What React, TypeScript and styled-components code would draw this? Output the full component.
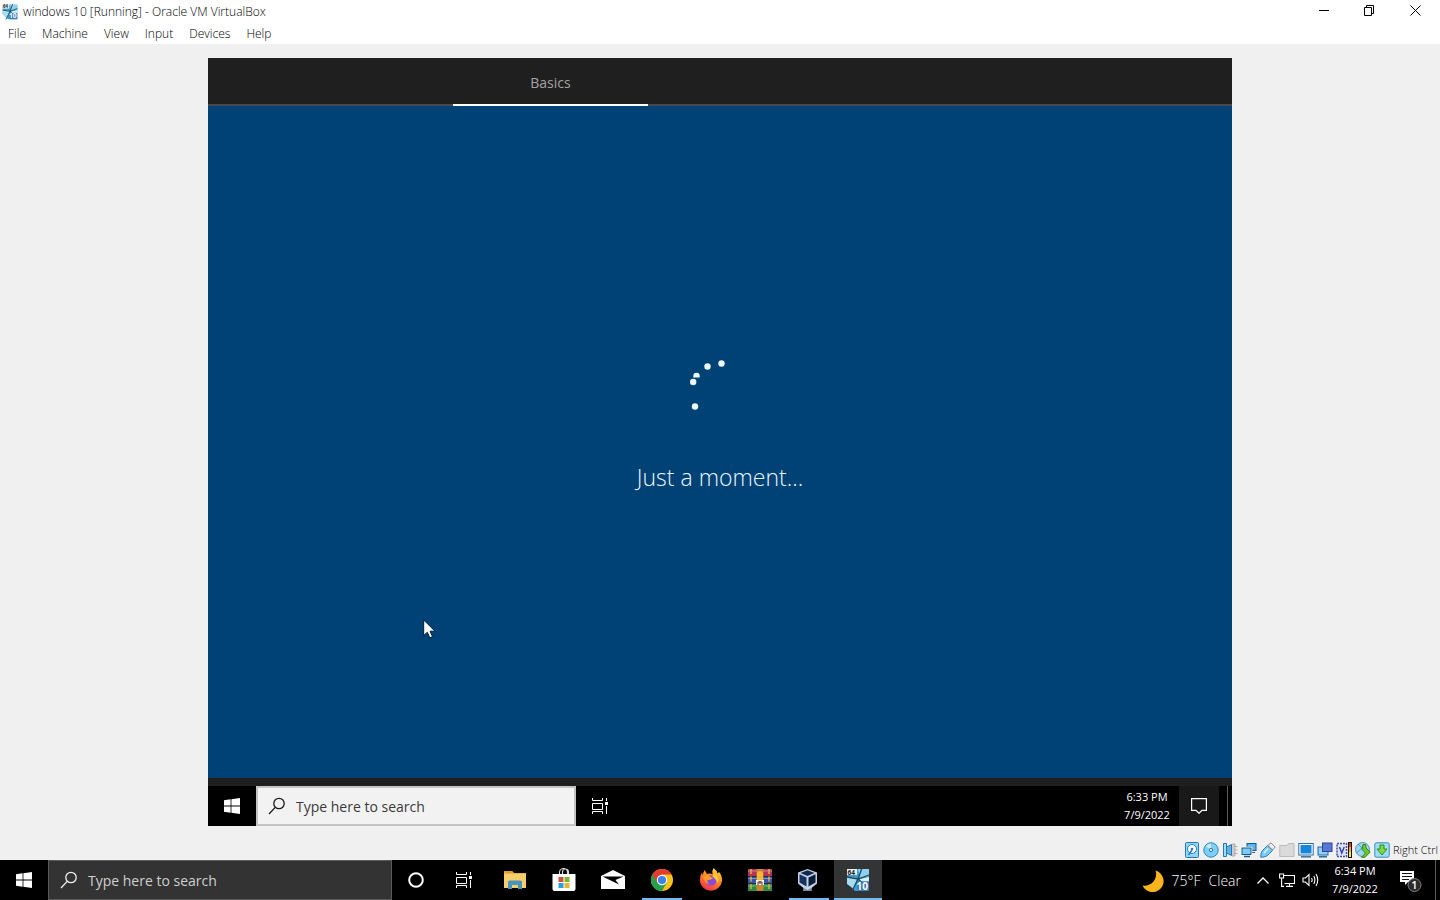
import React from "react";
import styled, { createGlobalStyle, css } from "styled-components";

const GlobalStyle = createGlobalStyle`
  *, *::before, *::after { box-sizing: border-box; }
  body {
    margin: 0;
    background: #f0f0f0;
    color: #000;
    font-family: "Segoe UI", "Open Sans", "Noto Sans", sans-serif;
    font-size: 12px;
  }
  button, input { font: inherit; color: inherit; }
  svg { display: block; flex: none; }
`;

const Window = styled.div`
  display: flex;
  flex-direction: column;
  min-height: 100vh;
`;

const TitleBar = styled.header`
  display: flex;
  align-items: center;
  height: 24px;
  padding: 0 2px;
  background: #fff;
`;

const Title = styled.h1`
  flex: 1;
  margin: 0 0 0 5px;
  font-size: 12px;
  font-weight: 350;
  line-height: 24px;
  white-space: nowrap;
`;

const PlainButton = styled.button`
  display: flex;
  align-items: center;
  justify-content: center;
  border: 0;
  padding: 0;
  background: transparent;
`;

const CaptionButton = styled(PlainButton)`
  width: 46px;
  height: 20px;
  align-self: flex-start;
`;

const MenuBar = styled.nav`
  display: flex;
  height: 20px;
  background: #fff;
`;

const MenuItem = styled(PlainButton)`
  padding: 0 8px;
  font-size: 12px;
  font-weight: 350;
  line-height: 20px;
`;

const Stage = styled.main`
  flex: 1;
  display: flex;
  justify-content: center;
  padding: 14px;
`;

const Guest = styled.section`
  display: flex;
  flex-direction: column;
  width: 100%;
  max-width: 1024px;
  min-height: 768px;
  background: #1f1f1f;
`;

const Steps = styled.div`
  display: grid;
  grid-template-columns: 245px 195px 1fr;
  height: 48px;
  box-shadow: inset 0 -2px #47494c;
`;

const Step = styled(PlainButton)`
  grid-column: 2;
  padding-top: 4px;
  border-bottom: 2px solid #fff;
  color: #a3a3a3;
  font-size: 14px;
  line-height: 20px;
`;

const Setup = styled.div`
  position: relative;
  flex: 1;
  display: flex;
  flex-direction: column;
  align-items: center;
  justify-content: center;
  gap: 41px;
  margin-bottom: 8px;
  padding-bottom: 31px;
  background: #004275;
`;

const Message = styled.p`
  margin: 0;
  color: #e9f7ff;
  font-size: 23px;
  font-weight: 350;
  line-height: 32px;
`;

const Pointer = styled.svg`
  position: absolute;
  left: 215px;
  top: 513px;
`;

const Bar = styled.footer`
  display: flex;
  align-items: stretch;
  height: 40px;
  background: #000;
  color: #fff;
`;

const BarButton = styled(PlainButton)<{ $active?: boolean; $running?: boolean }>`
  width: 48px;
  background: ${(p) => (p.$active ? "#333436" : "transparent")};
  ${(p) =>
    p.$running &&
    css`
      position: relative;
      &::after {
        content: "";
        position: absolute;
        bottom: 0;
        width: ${p.$active ? 48 : 40}px;
        height: 2px;
        background: #76b9ed;
      }
    `}
`;

const Search = styled.label<{ $light?: boolean }>`
  display: flex;
  align-items: center;
  gap: 10px;
  width: ${(p) => (p.$light ? 320 : 344)}px;
  padding: 0 ${(p) => (p.$light ? 10 : 11)}px;
  border: ${(p) => (p.$light ? "2px solid #c3c3c3" : "1px solid #5a5a5a")};
  background: ${(p) => (p.$light ? "#f2f2f2" : "#333")};
  color: ${(p) => (p.$light ? "#1b1b1b" : "#f2f2f2")};
  input {
    flex: 1;
    min-width: 0;
    padding: 2px 0 0;
    border: 0;
    outline: 0;
    background: transparent;
    font-size: 14px;
    line-height: 20px;
  }
  input::placeholder {
    color: ${(p) => (p.$light ? "#3a3a3a" : "#cfcfcf")};
    opacity: 1;
  }
`;

const Apps = styled.div`
  display: flex;
  gap: 1px;
  margin-left: 3px;
`;

const Tray = styled.div`
  display: flex;
  align-items: stretch;
  margin-left: auto;
`;

const Weather = styled(PlainButton)`
  gap: 8px;
  margin-right: 10px;
  padding-top: 2px;
  font-size: 14px;
  font-weight: 350;
  line-height: 20px;
`;

const TrayButton = styled(PlainButton)`
  width: 24px;
`;

const Clock = styled(PlainButton)`
  flex-direction: column;
  width: 64px;
  font-size: 11px;
  line-height: 18px;
  white-space: nowrap;
`;

const ActionCenter = styled(PlainButton)<{ $shaded?: boolean }>`
  width: ${(p) => (p.$shaded ? 40 : 48)}px;
  background: ${(p) => (p.$shaded ? "#191919" : "transparent")};
`;

const ShowDesktop = styled(PlainButton)<{ $wide?: boolean }>`
  width: 5px;
  margin-left: ${(p) => (p.$wide ? 8 : 0)}px;
  border-left: 1px solid #5c5c5c;
`;

const StatusBar = styled.div`
  display: flex;
  align-items: center;
  justify-content: flex-end;
  gap: 3px;
  height: 20px;
  padding-right: 2px;
  font-size: 11px;
  font-weight: 350;
  line-height: 20px;
`;

const Windows = () => (
  <svg width="16" height="16" viewBox="0 0 16 16" fill="#fff">
    <path d="M0 2.3 6.6 1.3V7.6H0zM7.4 1.2 16 0V7.6H7.4zM0 8.4H6.6V14.7L0 13.7zM7.4 8.4H16V16L7.4 14.8z" />
  </svg>
);

const Magnifier = () => (
  <svg width="18" height="18" viewBox="0 0 18 18" fill="none" stroke="currentColor" strokeWidth="1.3">
    <circle cx="11" cy="6.5" r="5.2" />
    <path d="M7.2 10.4 1 17" />
  </svg>
);

const TaskView = () => (
  <svg width="18" height="16" viewBox="0 0 18 16" fill="none" stroke="#fff">
    <path d="M1.500 0V2.500H11.500V0M1.500 16V13.500H11.500V16M1.500 5.500H11.500V11.500H1.500zM15.500 0V3M15.500 8V16" />
    <path d="M14 4H17V7H14z" fill="#fff" stroke="none" />
  </svg>
);

const VmIcon = ({ size }: { size: number }) => (
  <svg width={size} height={size} viewBox="0 0 24 24">
    <path d="M1 1H23V23H9L1 15z" fill="#3f9cca" />
    <path d="M12 1H23V8L14 10z" fill="#8fd0ee" />
    <path d="M1 9 11 10 8 21 1 16z" fill="#a8dcf2" />
    <path d="M14 11 23 9V14H13z" fill="#d7f0fa" />
    <path d="M16 0 12 11 6 23M1 9 12 11 23 7M12 11 20 18" stroke="#1d4a66" strokeWidth="1.3" fill="none" />
    <path d="M1 1H11V7H1z" fill="#eee" />
    <text x="1.500" y="6.500" fontSize="6.500" fontWeight="700" fill="#222">64</text>
    <path d="M11 13H23V23H12z" fill="#3a74b4" opacity=".75" />
    <text x="10.500" y="21.500" fontSize="10" fontWeight="700" fill="#fff">10</text>
  </svg>
);

const Folder = () => (
  <svg width="22" height="20" viewBox="0 0 22 20">
    <path d="M0 1H8L10 3H22V18H0z" fill="#e8b542" />
    <path d="M0 4H22V18H0z" fill="#f6cf6c" />
    <path d="M0 1H8L10 3H2z" fill="#d99f2b" />
    <path d="M4 19V12Q4 10.500 5.500 10.500H16.500Q18 10.500 18 12V19H14V15H8V19z" fill="#4a93bd" />
  </svg>
);

const Store = () => (
  <svg width="24" height="24" viewBox="0 0 24 24">
    <path d="M7.500 7V4.500A4 4 0 0 1 15.500 4.500V7M10.500 7V4A3 3 0 0 1 16.500 4V7" fill="none" stroke="#ddd" strokeWidth="1.1" />
    <path d="M.5 6H23.500V21Q23.500 23 21.500 23H2.500Q.5 23 .5 21z" fill="#fff" />
    <path d="M6.500 9H11.500V14H6.500z" fill="#c9553c" />
    <path d="M12.500 9H17.500V14H12.500z" fill="#7fb32c" />
    <path d="M6.500 15H11.500V20H6.500z" fill="#2a9fdb" />
    <path d="M12.500 15H17.500V20H12.500z" fill="#dfbb2b" />
  </svg>
);

const Mail = () => (
  <svg width="24" height="20" viewBox="0 0 24 20">
    <path d="M0 6 12 0 24 6V19H0z" fill="#fff" />
    <path d="M1.500 6.500H22.500L14.500 10 18 14.500z" fill="#000" />
  </svg>
);

const Chrome = () => (
  <svg width="22" height="22" viewBox="0 0 22 22">
    <circle cx="11" cy="11" r="11" fill="#fbc116" />
    <path d="M11 11 1.470 5.500A11 11 0 0 0 11 22L15.800 13.700z" fill="#27a04b" />
    <path d="M1.470 5.500A11 11 0 0 1 20.530 5.500H11L6.200 13.700z" fill="#e33b2e" />
    <circle cx="11" cy="11" r="5.200" fill="#fff" />
    <circle cx="11" cy="11" r="4.100" fill="#3f7fea" />
  </svg>
);

const Firefox = () => (
  <svg width="24" height="24" viewBox="0 0 24 24">
    <defs>
      <linearGradient id="fox" x1=".8" y1="0" x2=".3" y2="1">
        <stop offset="0" stopColor="#ffe14a" />
        <stop offset=".45" stopColor="#ff8d22" />
        <stop offset="1" stopColor="#f0304d" />
      </linearGradient>
    </defs>
    <path d="M14.500 0Q18 2.500 18.500 5.500L20 4Q23.500 8 23 13A11.200 11.200 0 0 1 .8 13Q.5 8 3 4.500L3.500 7 5.500 2 8 6Q11 5 13.500 6.500 12.500 3 14.500 0z" fill="url(#fox)" />
    <circle cx="12" cy="12.500" r="5.300" fill="#8b4bd6" />
    <path d="M4 9Q8 6.500 12 9L14 10.500Q11 12 8.500 12 8 15 11 16.500 6 16 4 9z" fill="#ff9b2b" />
    <path d="M15.500 5Q21 9 19 15 17 11 13.500 8.500z" fill="#ffc933" />
  </svg>
);

const WinRar = () => (
  <svg width="24" height="22" viewBox="0 0 24 22">
    <path d="M0 0H24V7H0z" fill="#b73355" />
    <path d="M0 7.500H24V14.500H0z" fill="#3856a8" />
    <path d="M0 15H24V22H0z" fill="#2f8b46" />
    <path d="M0 2H24M0 9.500H24M0 17H24" stroke="#fff" strokeOpacity=".35" />
    <path d="M3 0V22M21 0V22" stroke="#e0b040" strokeWidth="1.500" strokeDasharray="5 2.500" />
    <path d="M8.500 0H15.500V22H8.500z" fill="#c9862c" />
    <path d="M9 4Q12 0 15 4V11H9z" fill="#f3b83c" />
    <path d="M8 11H16V16H8z" fill="#f5f0e6" />
    <path d="M10 16V13H14V16M12 12V15" stroke="#5a3413" fill="none" />
  </svg>
);

const VirtualBox = () => (
  <svg width="24" height="24" viewBox="0 0 24 24">
    <path d="M10.500 1 20 4.500V15.500L14.500 20V23H6.500V20L1 15.500V4.500z" fill="#c5d2e4" />
    <path d="M10.500 2.300 17.500 5 10.500 8 3.500 5z" fill="#10284c" />
    <path d="M2.500 6.300 9.500 9.500V18.500L2.500 14.500z" fill="#143160" />
    <path d="M18.500 6.300 11.500 9.500V18.500L18.500 14.500z" fill="#0a1d3c" />
    <path d="M6.500 20 10.500 22 14.500 20V23H6.500z" fill="#7488a8" />
  </svg>
);

const Moon = () => (
  <svg width="22" height="22" viewBox="0 0 22 22">
    <path d="M13.500 0.500A11 11 0 1 1 0.500 15.500 11.500 11.500 0 0 0 13.500 0.500z" fill="#fbb41c" />
    <path d="M20 6A11 11 0 0 1 3 18.500 11 11 0 0 0 20 6z" fill="#ffcf3f" />
  </svg>
);

const Network = () => (
  <svg width="16" height="14" viewBox="0 0 16 14" fill="none" stroke="#fff" strokeWidth="1.100">
    <path d="M5 2.500H15.500V10.500H5.500M10.500 10.500V13M7 13.400H14M.6 1H4.600V5H.6zM2.600 5V13.400H5" />
  </svg>
);

const Speaker = () => (
  <svg width="18" height="14" viewBox="0 0 18 14" fill="none" stroke="#fff" strokeWidth="1.100">
    <path d="M1 5H3.500L7 1.500V12.500L3.500 9H1zM9.500 5Q10.800 7 9.500 9M11.800 3Q14 7 11.800 11M14 1Q17.500 7 14 13" />
  </svg>
);

const Notifications = () => (
  <svg width="24" height="24" viewBox="0 0 24 24">
    <path d="M1 3H15V14H9L6 17V14H1z" fill="#fff" />
    <path d="M3 5.500H13M3 8.500H13M3 11.500H10" stroke="#111" />
    <circle cx="15.500" cy="17" r="6.500" fill="#2b2b2b" stroke="#7d7d7d" />
    <text x="15.500" y="21" fontSize="11" fontWeight="600" fill="#fff" textAnchor="middle">1</text>
  </svg>
);

const statusIcons: { name: string; art: React.ReactNode }[] = [
  {
    name: "Hard disks",
    art: (
      <>
        <rect x="1.500" y=".5" width="13" height="15" rx="1" fill="#8fd6fa" stroke="#2478b8" />
        <circle cx="8" cy="7" r="4.500" fill="#fff" stroke="#2b7bbd" />
        <path d="M8 8 4.500 13" stroke="#2b7bbd" strokeWidth="1.500" />
        <circle cx="8" cy="7" r="1.300" fill="#2b7bbd" />
      </>
    ),
  },
  {
    name: "Optical drives",
    art: (
      <>
        <circle cx="8" cy="8" r="7.200" fill="#7fd0f7" stroke="#2c86bd" />
        <path d="M8 8 3 4A7 7 0 0 1 8 1.500z" fill="#c6eefd" />
        <circle cx="8" cy="8" r="1.600" fill="#fff" stroke="#2472aa" />
      </>
    ),
  },
  {
    name: "Audio",
    art: (
      <>
        <path d="M10 2H13V14H10M12 4.500H15.500M12 8H15.500M12 11.500H15.500" stroke="#b0b0b0" fill="#ccc" />
        <path d="M1.500 1.500H4.500V14.500H1.500z" fill="#a5dcf8" stroke="#2a77ad" />
        <path d="M4.500 5 9.500 2.500V13.500L4.500 11z" fill="#5ab2e6" stroke="#2a77ad" />
      </>
    ),
  },
  {
    name: "Network",
    art: (
      <>
        <rect x="6" y="1.500" width="9" height="7" fill="#59b5ef" stroke="#1f588c" />
        <path d="M10 10.500H14" stroke="#1f588c" />
        <rect x="1" y="6" width="9" height="6.500" fill="#7bcbf7" stroke="#fff" strokeWidth="2.500" />
        <rect x="1" y="6" width="9" height="6.500" fill="#7bcbf7" stroke="#1f588c" />
        <path d="M3 14.500H9" stroke="#1f588c" strokeWidth="1.500" />
      </>
    ),
  },
  {
    name: "USB",
    art: (
      <>
        <path d="M.8 15.200Q.5 9.500 4.500 6.500L7.500 3.500 12.500 8.500 9.500 11.500Q6.500 15.500.8 15.200z" fill="#7ccaf5" stroke="#2879b3" />
        <path d="M4 11 8 6.500" stroke="#d3f0fd" strokeWidth="1.500" />
        <path d="M8 3.500 11 .8 15.200 5 12.500 8z" fill="#eee" stroke="#888" />
      </>
    ),
  },
  {
    name: "Shared folders",
    art: <path d="M.8 3.500H8L9.500 1.500H15V14.500H.8z" fill="#dadada" stroke="#bcbcbc" />,
  },
  {
    name: "Display",
    art: (
      <>
        <rect x=".8" y="1.500" width="14.400" height="11.500" fill="#fff" stroke="#2d6fa3" />
        <rect x="2.500" y="3" width="11" height="8.500" fill="#1686db" />
        <path d="M3 14.800H13" stroke="#3a6f9b" strokeWidth="1.500" />
      </>
    ),
  },
  {
    name: "Recording",
    art: (
      <>
        <rect x="1" y="5" width="10" height="8" fill="#8fd3f8" stroke="#2566a0" />
        <rect x="5.500" y="1" width="9.500" height="8.500" fill="#5876d6" stroke="#2d439c" />
        <path d="M2 14.800H10" stroke="#2566a0" strokeWidth="1.500" />
      </>
    ),
  },
  {
    name: "Processor",
    art: (
      <>
        <rect x="1" y="1.500" width="9.500" height="13" fill="#dbe3ff" stroke="#4250a8" strokeWidth="1.500" strokeDasharray="2 1" />
        <path d="M3.500 5 5.800 11 8.200 5" fill="none" stroke="#3340a0" strokeWidth="1.400" />
        <path d="M12 0H16V16H12z" fill="#111" />
        <path d="M13 1H15V5H13z" fill="#e23c1f" />
        <path d="M13 5H15V10H13z" fill="#f5a91e" />
        <path d="M13 10H15V15H13z" fill="#f0e94f" />
      </>
    ),
  },
  {
    name: "Mouse integration",
    art: (
      <>
        <circle cx="7.500" cy="7.500" r="7" fill="#9bd7f2" stroke="#5b93b5" />
        <path d="M3 2 7 6 1.500 11" fill="none" stroke="#4a95bd" />
        <path d="M8 2.500H10.500L11 6 15.200 10 10 15.300H6.500L10.500 11 7 7.500z" fill="#6bc72c" stroke="#33821a" />
      </>
    ),
  },
  {
    name: "Keyboard capture",
    art: (
      <>
        <rect x=".8" y=".8" width="14.400" height="14.400" rx="1.500" fill="#9fdcf8" stroke="#3b8cbd" />
        <path d="M6 3H10V7H13L8 13 3 7H6z" fill="#7bdc3c" stroke="#2f8b25" />
      </>
    ),
  },
];

const apps: { name: string; icon: React.ReactNode; running?: boolean; active?: boolean }[] = [
  { name: "File Explorer", icon: <Folder /> },
  { name: "Microsoft Store", icon: <Store /> },
  { name: "Mail", icon: <Mail /> },
  { name: "Google Chrome", icon: <Chrome />, running: true },
  { name: "Firefox", icon: <Firefox /> },
  { name: "WinRAR", icon: <WinRar /> },
  { name: "VirtualBox Manager", icon: <VirtualBox />, running: true },
  { name: "windows 10 virtual machine", icon: <VmIcon size={24} />, running: true, active: true },
];

export default function App() {
  return (
    <Window>
      <GlobalStyle />
      <TitleBar>
        <VmIcon size={16} />
        <Title>windows 10 [Running] - Oracle VM VirtualBox</Title>
        <CaptionButton aria-label="Minimize">
          <svg width="11" height="11" fill="none" stroke="#000"><path d="M1 5.500H11" /></svg>
        </CaptionButton>
        <CaptionButton aria-label="Restore">
          <svg width="11" height="11" fill="none" stroke="#000"><path d="M.5 2.500H7.500V10.500H.5zM2.500 2.500V.5H9.500V8.500H7.500" /></svg>
        </CaptionButton>
        <CaptionButton aria-label="Close">
          <svg width="11" height="11" fill="none" stroke="#000"><path d="M.5.5 10.500 10.500M10.500.5.5 10.500" /></svg>
        </CaptionButton>
      </TitleBar>
      <MenuBar>
        {["File", "Machine", "View", "Input", "Devices", "Help"].map((item) => (
          <MenuItem key={item}>{item}</MenuItem>
        ))}
      </MenuBar>

      <Stage>
        <Guest>
          <Steps>
            <Step>Basics</Step>
          </Steps>
          <Setup>
            <svg width="60" height="60" viewBox="0 0 60 60" fill="#eefaff">
              <circle cx="31.500" cy="3.500" r="3.200" />
              <circle cx="17.500" cy="6.500" r="3.200" />
              <path d="M3.300 17.500V16A3.200 3.200 0 0 1 9.700 16V17.500z" />
              <circle cx="3.200" cy="22" r="3.200" />
              <circle cx="5" cy="46.500" r="3.200" />
            </svg>
            <Message>Just a moment...</Message>
            <Pointer width="13" height="20" viewBox="0 0 13 20">
              <path d="M.7 1V16.500L4.300 13.300 6.800 18.800 9.500 17.600 7.100 12.200H12z" fill="#fff" stroke="#001c38" />
            </Pointer>
          </Setup>
          <Bar>
            <BarButton aria-label="Guest start"><Windows /></BarButton>
            <Search $light>
              <Magnifier />
              <input aria-label="Search the guest" placeholder="Type here to search" />
            </Search>
            <BarButton aria-label="Guest task view"><TaskView /></BarButton>
            <Tray>
              <Clock>
                <span>6:33 PM</span>
                <span>7/9/2022</span>
              </Clock>
              <ActionCenter $shaded aria-label="Guest notifications">
                <svg width="16" height="16" viewBox="0 0 16 16" fill="none" stroke="#fff" strokeWidth="1.200">
                  <path d="M.6.6H15.400V12.400H11L8 15.300 5 12.400H.6z" />
                </svg>
              </ActionCenter>
              <ShowDesktop $wide aria-label="Show guest desktop" />
            </Tray>
          </Bar>
        </Guest>
      </Stage>

      <StatusBar>
        {statusIcons.map(({ name, art }) => (
          <svg key={name} role="img" aria-label={name} width="16" height="16" viewBox="0 0 16 16">
            {art}
          </svg>
        ))}
        <span>Right Ctrl</span>
      </StatusBar>

      <Bar>
        <BarButton aria-label="Start"><Windows /></BarButton>
        <Search>
          <Magnifier />
          <input aria-label="Search" placeholder="Type here to search" />
        </Search>
        <BarButton aria-label="Cortana">
          <svg width="16" height="16" fill="none" stroke="#fff" strokeWidth="2"><circle cx="8" cy="8" r="6.800" /></svg>
        </BarButton>
        <BarButton aria-label="Task view"><TaskView /></BarButton>
        <Apps>
          {apps.map(({ name, icon, running, active }) => (
            <BarButton key={name} aria-label={name} $running={running} $active={active}>
              {icon}
            </BarButton>
          ))}
        </Apps>
        <Tray>
          <Weather>
            <Moon />
            <span>75°F</span>
            <span>Clear</span>
          </Weather>
          <TrayButton aria-label="Show hidden icons">
            <svg width="12" height="7" fill="none" stroke="#fff" strokeWidth="1.300"><path d="M.5 6.500 6 1 11.500 6.500" /></svg>
          </TrayButton>
          <TrayButton aria-label="Network"><Network /></TrayButton>
          <TrayButton aria-label="Volume"><Speaker /></TrayButton>
          <Clock>
            <span>6:34 PM</span>
            <span>7/9/2022</span>
          </Clock>
          <ActionCenter aria-label="Notifications"><Notifications /></ActionCenter>
          <ShowDesktop aria-label="Show desktop" />
        </Tray>
      </Bar>
    </Window>
  );
}
